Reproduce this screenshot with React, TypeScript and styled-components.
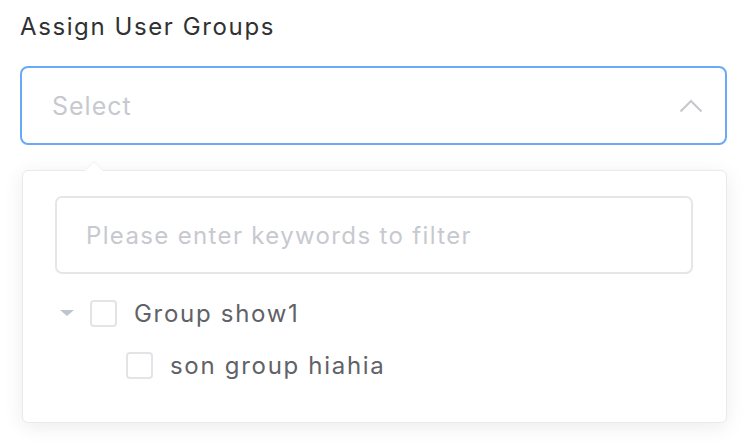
import React from "react";
import styled, { createGlobalStyle } from "styled-components";

const Global = createGlobalStyle`
  html, body { margin: 0; padding: 0; background: #ffffff; }
  body { font-family: Inter, "Noto Sans", sans-serif; -webkit-font-smoothing: antialiased; }
`;

const Page = styled.div`
  width: 754px;
  height: 446px;
  box-sizing: border-box;
  padding: 12px 27px 0 20px;
  overflow: hidden;
`;

const Label = styled.div`
  font-size: 24px;
  line-height: 30px;
  letter-spacing: 1.6px;
  color: #303133;
  margin-bottom: 24px;
`;

const SelectBox = styled.div`
  box-sizing: border-box;
  width: 707px;
  height: 79px;
  border: 2px solid #6aa9f5;
  border-radius: 8px;
  display: flex;
  align-items: center;
  justify-content: space-between;
  padding: 0 22px 0 30px;
`;

const Placeholder = styled.span`
  font-size: 25px;
  letter-spacing: 1px;
  color: #c7c9cf;
`;

const Dropdown = styled.div`
  position: relative;
  box-sizing: border-box;
  margin: 25px 0 0 2px;
  width: 705px;
  height: 253px;
  background: #fff;
  border: 1px solid #e8eaee;
  border-radius: 6px;
  box-shadow: 0 4px 20px rgba(0, 0, 0, 0.08);
  padding: 25px 33px 0 32px;
`;

const Arrow = styled.div`
  position: absolute;
  top: -10px;
  left: 61px;
  width: 0;
  height: 0;
  border-left: 10px solid transparent;
  border-right: 10px solid transparent;
  border-bottom: 10px solid #eceef1;
  &::after {
    content: "";
    position: absolute;
    left: -9px;
    top: 1px;
    border-left: 9px solid transparent;
    border-right: 9px solid transparent;
    border-bottom: 9px solid #fff;
  }
`;

const Filter = styled.div`
  box-sizing: border-box;
  height: 78px;
  border: 2px solid #e4e6ea;
  border-radius: 7px;
  display: flex;
  align-items: center;
  padding-left: 29px;
  font-size: 24px;
  letter-spacing: 1.35px;
  color: #c7c9cf;
`;

const Tree = styled.div`
  margin-top: 13px;
`;

const Row = styled.div<{ $indent: number }>`
  height: 52px;
  display: flex;
  align-items: center;
  padding-left: ${(p) => p.$indent}px;
`;

const Caret = styled.div`
  width: 0;
  height: 0;
  border-left: 7px solid transparent;
  border-right: 7px solid transparent;
  border-top: 6px solid #c0c4cc;
  margin: 0 16px 0 0;
`;

const Check = styled.span`
  box-sizing: border-box;
  width: 27px;
  height: 27px;
  border: 2px solid #e2e4e8;
  border-radius: 4px;
  background: #fff;
  margin-right: 17px;
`;

const RowText = styled.span`
  font-size: 24px;
  letter-spacing: 1.7px;
  color: #5f6266;
`;

export default function App() {
  return (
    <>
      <Global />
      <Page>
        <Label>Assign User Groups</Label>
        <SelectBox>
          <Placeholder>Select</Placeholder>
          <svg width="24" height="14" viewBox="0 0 24 14">
            <path d="M1.5 12.5 L12 2 L22.5 12.5" fill="none" stroke="#c7c9cf" strokeWidth="2.2" />
          </svg>
        </SelectBox>
        <Dropdown>
          <Arrow />
          <Filter>Please enter keywords to filter</Filter>
          <Tree>
            <Row $indent={5}>
              <Caret />
              <Check />
              <RowText>Group show1</RowText>
            </Row>
            <Row $indent={71}>
              <Check />
              <RowText>son group hiahia</RowText>
            </Row>
          </Tree>
        </Dropdown>
      </Page>
    </>
  );
}
